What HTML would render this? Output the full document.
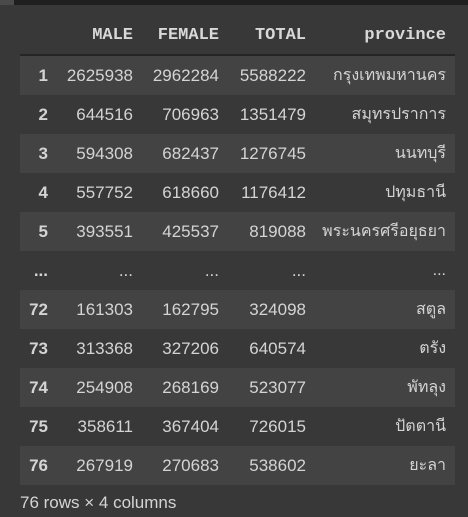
<!DOCTYPE html><html><head><style>
body{margin:0;width:468px;height:517px;background:#383838;overflow:hidden;font-family:"Liberation Sans","Noto Sans CJK SC",sans-serif;color:#d4d4d4;position:relative}
.top{position:absolute;left:0;top:0;width:468px;height:5px;background:#1f1f1f}
.top i{position:absolute;left:0;top:0;width:14px;height:5px;background:#4a4a4a}
table{position:absolute;left:20px;top:16px;width:435px;border-collapse:collapse;font-size:17px;table-layout:fixed}
th{font-family:"Liberation Mono",monospace;font-weight:bold;font-size:17px;text-align:right;height:38px;padding:0 9px 0 0;border-bottom:2px solid #252525;color:#d8d8d8}
td{height:39px;padding:0 9px 0 0;text-align:right;white-space:nowrap;overflow:visible}
td:first-child{font-weight:bold}
td:last-child{font-size:16px}
tr:nth-child(odd) td{background:#434343}
.cap{position:absolute;left:20px;top:493px;font-size:17px}
</style></head><body><div class="top"><i></i></div>
<table><colgroup><col style="width:37px"><col style="width:85px"><col style="width:86px"><col style="width:87px"><col style="width:140px"></colgroup>
<thead><tr><th></th><th>MALE</th><th>FEMALE</th><th>TOTAL</th><th>province</th></tr></thead><tbody>
<tr><td>1</td><td>2625938</td><td>2962284</td><td>5588222</td><td>กรุงเทพมหานคร</td></tr>
<tr><td>2</td><td>644516</td><td>706963</td><td>1351479</td><td>สมุทรปราการ</td></tr>
<tr><td>3</td><td>594308</td><td>682437</td><td>1276745</td><td>นนทบุรี</td></tr>
<tr><td>4</td><td>557752</td><td>618660</td><td>1176412</td><td>ปทุมธานี</td></tr>
<tr><td>5</td><td>393551</td><td>425537</td><td>819088</td><td>พระนครศรีอยุธยา</td></tr>
<tr><td>...</td><td>...</td><td>...</td><td>...</td><td>...</td></tr>
<tr><td>72</td><td>161303</td><td>162795</td><td>324098</td><td>สตูล</td></tr>
<tr><td>73</td><td>313368</td><td>327206</td><td>640574</td><td>ตรัง</td></tr>
<tr><td>74</td><td>254908</td><td>268169</td><td>523077</td><td>พัทลุง</td></tr>
<tr><td>75</td><td>358611</td><td>367404</td><td>726015</td><td>ปัตตานี</td></tr>
<tr><td>76</td><td>267919</td><td>270683</td><td>538602</td><td>ยะลา</td></tr>
</tbody></table>
<div class="cap">76 rows × 4 columns</div>
</body></html>
